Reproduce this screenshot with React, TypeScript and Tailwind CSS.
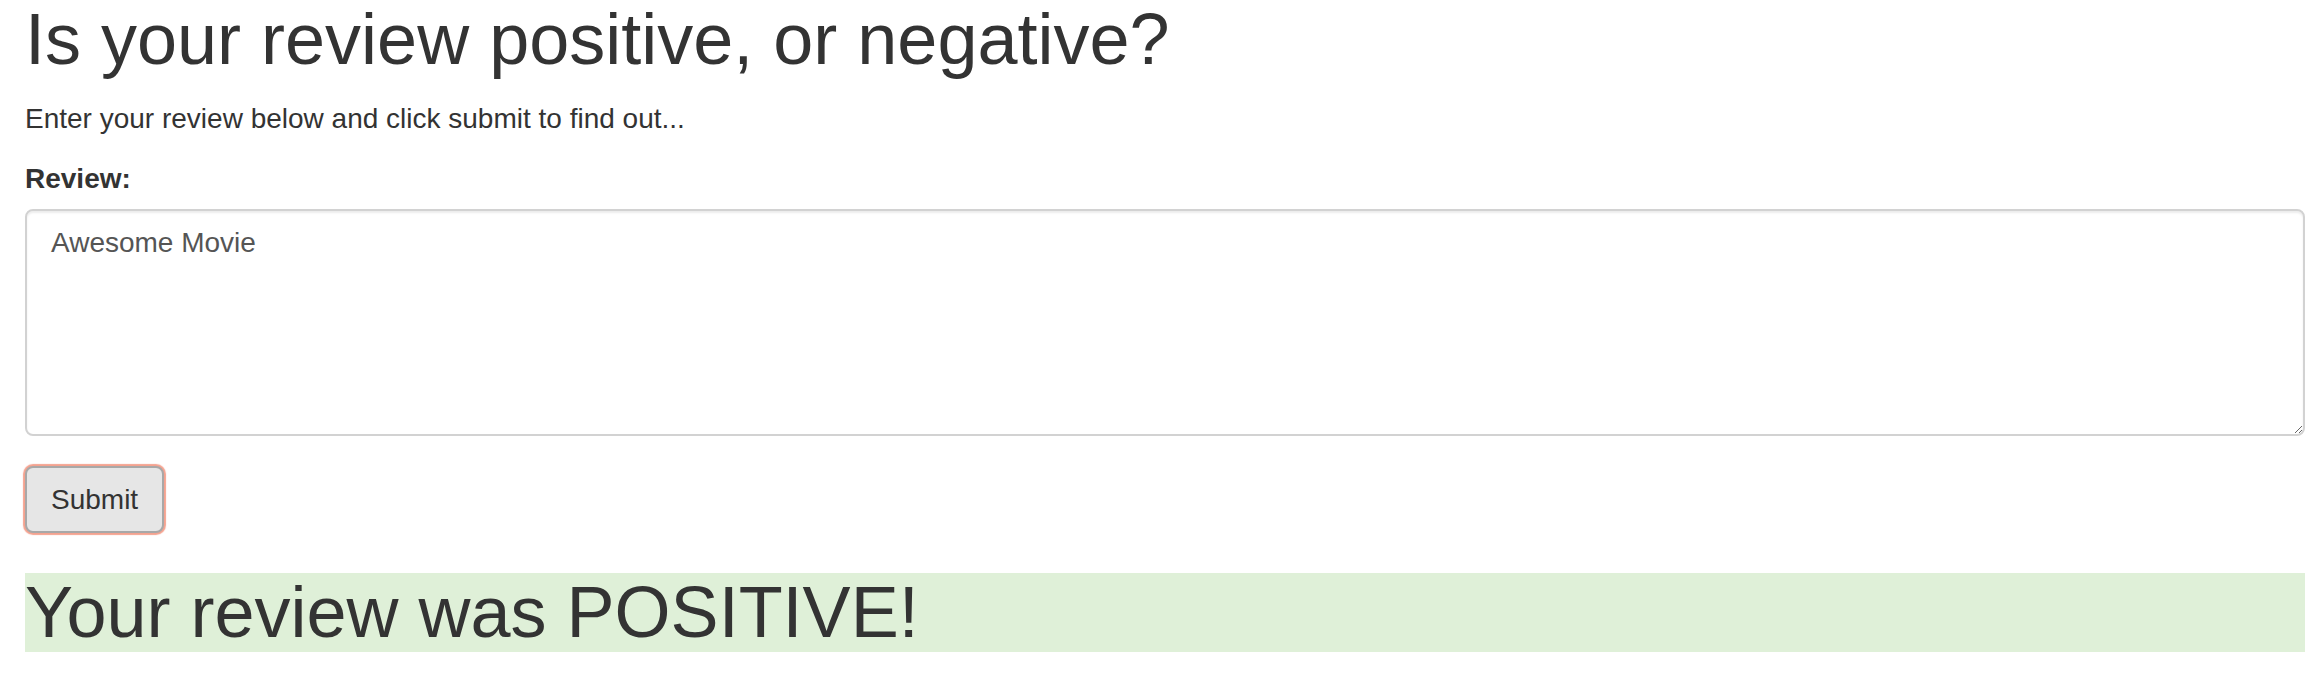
import React, { useState } from 'react';

const App: React.FC = () => {
    const [review, setReview] = useState('Awesome Movie');

    return (
        <div className="min-h-screen bg-white pl-[25px] pr-[17px] text-[#333] font-['Liberation_Sans',Arial,sans-serif]">
            {/* Heading */}
            <h1 className="text-[72px] leading-[79.2px] font-normal mb-[20px]">
                Is your review positive, or negative?
            </h1>
            <p className="text-[28px] leading-[40px] mb-[20px]">
                Enter your review below and click submit to find out...
            </p>

            {/* Form */}
            <form onSubmit={(e) => e.preventDefault()}>
                <div className="mb-[30px]">
                    <label htmlFor="review" className="inline-block text-[28px] leading-[40px] font-bold mb-[10px]">
                        Review:
                    </label>
                    <textarea
                        id="review"
                        value={review}
                        onChange={(e) => setReview(e.target.value)}
                        className="block w-full h-[227px] px-[24px] py-[12px] text-[28px] leading-[40px] text-[#555] bg-white border-2 border-[#d2d2d2] rounded-[8px] shadow-[inset_0_2px_2px_rgba(0,0,0,0.075)] outline-none font-['Liberation_Sans',Arial,sans-serif]"
                    />
                </div>
                <button
                    type="submit"
                    className="block h-[67px] px-[24px] text-[28px] leading-[40px] text-[#333] bg-[#e6e6e6] border-2 border-[#a8a8a8] rounded-[8px] shadow-[0_0_1px_2px_#f4a28f] font-['Liberation_Sans',Arial,sans-serif]"
                >
                    Submit
                </button>
            </form>

            {/* Result */}
            <h1 className="mt-[40px] bg-[#dff0d8] text-[72px] leading-[79.2px] font-normal">
                Your review was POSITIVE!
            </h1>
        </div>
    );
};

export default App;
